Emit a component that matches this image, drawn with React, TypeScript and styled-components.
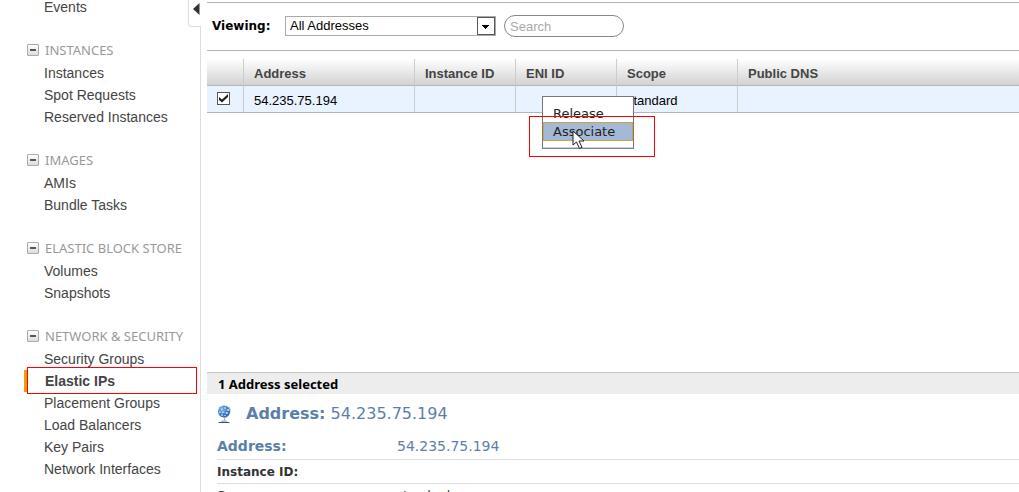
import React from 'react';
import styled, { createGlobalStyle } from 'styled-components';

const sans = '"Liberation Sans", Arial, sans-serif';
const wide = '"DejaVu Sans", Verdana, sans-serif';
const humanist = '"Noto Sans", Tahoma, sans-serif';

const GlobalStyle = createGlobalStyle`
  * { box-sizing: border-box; }
  body { margin: 0; background: #fff; color: #000; font-family: ${sans}; font-size: 13px; }
`;

const Page = styled.div`
  display: grid;
  grid-template-columns: 201px minmax(0, 1fr);
  column-gap: 6px;
  height: 100vh;
  overflow: hidden;
`;

const Sidebar = styled.aside`
  position: relative;
  border-right: 1px solid #ddd;
  min-height: 0;
`;

const CollapseButton = styled.button`
  position: absolute;
  top: -8px;
  right: -1px;
  width: 13px;
  height: 35px;
  padding: 10px 0 0 4px;
  border: 1px solid #ddd;
  border-right: 0;
  border-bottom-left-radius: 4px;
  background: #fff;
  display: flex;
  svg { display: block; flex: none; }
`;

const Nav = styled.nav`
  margin-top: -4px;
  display: flex;
  flex-direction: column;
  gap: 22px;
`;

const GroupTitle = styled.h2`
  margin: 0;
  padding: 0 0 2px 27px;
  height: 22px;
  display: flex;
  align-items: center;
  gap: 6px;
  font: 400 13px/20px ${humanist};
  color: #999;
  white-space: nowrap;
`;

const ToggleButton = styled.button`
  width: 12px;
  height: 12px;
  padding: 0;
  border: 1px solid #aaa;
  border-radius: 1px;
  background: linear-gradient(#fff, #ddd);
  display: flex;
  align-items: center;
  justify-content: center;
  &::before { content: ''; width: 6px; height: 2px; background: #555; }
`;

const NavList = styled.ul`
  list-style: none;
  margin: 0;
  padding: 0;
`;

const NavItem = styled.li<{ $active?: boolean }>`
  position: relative;
  margin-left: 24px;
  padding-left: ${p => (p.$active ? 18 : 20)}px;
  border-left: ${p => (p.$active ? '3px solid #f90' : '0')};
  font-size: 14px;
  line-height: 22px;
  font-weight: ${p => (p.$active ? 700 : 400)};
`;

const NavLink = styled.a`
  color: #444;
  text-decoration: none;
`;

const Highlight = styled.span`
  position: absolute;
  z-index: 2;
  border: 1px solid #f00;
  pointer-events: none;
`;

const NavHighlight = styled(Highlight)`
  inset: -3px 3px -2px 0;
`;

const MenuHighlight = styled(Highlight)`
  inset: 19px -22px -9px -14px;
`;

const Main = styled.main`
  display: flex;
  flex-direction: column;
  min-width: 0;
  min-height: 0;
  padding-top: 2px;
`;

const Toolbar = styled.div`
  display: flex;
  align-items: center;
  flex: none;
  height: 49px;
  padding: 0 0 1px 5px;
  border: solid #b5b5b5;
  border-width: 1px 0;
  margin-bottom: 8px;
`;

const ViewLabel = styled.label`
  width: 73px;
  font: 700 12px/20px ${wide};
`;

const SelectWrap = styled.span`
  position: relative;
  width: 211px;
  height: 20px;
  margin-right: 8px;
`;

const ViewSelect = styled.select`
  appearance: none;
  display: block;
  width: 100%;
  height: 20px;
  padding: 0 20px 0 4px;
  border: 1px solid #aaa;
  border-radius: 0;
  background: #fff;
  color: #000;
  font: 13px/18px ${sans};
`;

const SelectArrow = styled.svg`
  position: absolute;
  top: 1px;
  right: 1px;
  pointer-events: none;
`;

const SearchBox = styled.input`
  width: 120px;
  height: 22px;
  padding: 0 5px;
  border: 1px solid #888;
  border-radius: 11px;
  background: #fff;
  font: 13px/18px ${sans};
  &::placeholder { color: #aaa; opacity: 1; }
`;

const TableArea = styled.section`
  position: relative;
  flex: 1;
  min-height: 0;
`;

const AddressTable = styled.table`
  width: 100%;
  table-layout: fixed;
  border-collapse: separate;
  border-spacing: 0;

  th, td {
    height: 27px;
    padding: 2px 10px 0;
    border-right: 1px solid #ccc;
    border-bottom: 1px solid #b5b5b5;
    text-align: left;
    white-space: nowrap;
  }
  th:last-child, td:last-child { border-right: 0; }
  thead tr { background: linear-gradient(#fff, #d0d0d0); }
  tbody tr { background: #e9f2ff; }
  th { color: #444; font-weight: 700; }
`;

const Col = styled.col<{ $width?: number }>`
  width: ${p => (p.$width ? `${p.$width}px` : 'auto')};
`;

const RowCheck = styled.input`
  appearance: none;
  display: block;
  width: 13px;
  height: 13px;
  margin: 0 0 4px;
  border: 1px solid #555;
  background: #fff;
  &:checked {
    background: #fff url("data:image/svg+xml,%3Csvg xmlns='http://www.w3.org/2000/svg' viewBox='0 0 11 11'%3E%3Cpath d='M1 4v3L4 9.500 10 4V1L4 6.500z' fill='%23222'/%3E%3C/svg%3E") center / 11px 11px no-repeat;
  }
`;

const ContextMenu = styled.div`
  position: absolute;
  top: 37px;
  left: 335px;
  width: 92px;
  height: 53px;
  padding-top: 8px;
  border: 1px solid #777;
  border-bottom-color: #888;
  background: #fff;
  box-shadow: inset 0 -1px #ccc;
`;

const MenuItem = styled.button<{ $hover?: boolean }>`
  display: block;
  width: 100%;
  height: ${p => (p.$hover ? 19 : 17)}px;
  padding: 0 9px;
  border: ${p => (p.$hover ? '1px solid #d2a346' : '0 solid transparent')};
  border-left-width: 1px;
  background: ${p => (p.$hover ? '#a4b9d6' : '#fff')};
  color: #222;
  font: 13px/17px ${wide};
  text-align: left;
`;

const Pointer = styled.svg`
  position: absolute;
  top: 33px;
  left: 29px;
  z-index: 3;
`;

const DetailPanel = styled.section`
  flex: none;
  height: 120px;
  overflow: hidden;
  border-top: 1px solid #c5c5c5;
`;

const SelectionBar = styled.div`
  height: 21px;
  padding-left: 11px;
  background: #ededed;
  font: 700 13px/22px ${humanist};
`;

const DetailTitle = styled.h1`
  display: flex;
  align-items: center;
  gap: 15px;
  height: 38px;
  margin: 0;
  padding: 2px 0 0 10px;
  color: #5c7fa8;
  font: 400 16px/20px ${wide};
`;

const DetailTable = styled.table`
  width: calc(100% - 10px);
  margin-left: 10px;
  border-collapse: separate;
  border-spacing: 0;
  font-family: ${wide};
  color: #333;

  th, td { padding: 0; border-bottom: 1px solid #ddd; text-align: left; }
  th { width: 180px; font-weight: 700; }
`;

const DetailRow = styled.tr<{ $lead?: boolean }>`
  height: ${p => (p.$lead ? 28 : 24)}px;
  font-size: ${p => (p.$lead ? 14 : 12)}px;
  line-height: 20px;
  color: ${p => (p.$lead ? '#5c7fa8' : '#333')};
`;

const groups = [
  { title: 'INSTANCES', items: ['Instances', 'Spot Requests', 'Reserved Instances'] },
  { title: 'IMAGES', items: ['AMIs', 'Bundle Tasks'] },
  { title: 'ELASTIC BLOCK STORE', items: ['Volumes', 'Snapshots'] },
  {
    title: 'NETWORK & SECURITY',
    items: ['Security Groups', 'Elastic IPs', 'Placement Groups', 'Load Balancers', 'Key Pairs', 'Network Interfaces'],
  },
];

const Globe = () => (
  <svg width="14" height="20" viewBox="0 0 14 20" aria-hidden="true">
    <defs>
      <radialGradient id="ocean" cx=".35" cy=".3" r=".8">
        <stop offset="0" stopColor="#8fc0ee" />
        <stop offset=".6" stopColor="#3f84cf" />
        <stop offset="1" stopColor="#2a5fa8" />
      </radialGradient>
    </defs>
    <path d="M12.500 3.500c1.500 4-.5 9-5 10.500v3" fill="none" stroke="#a9adb8" />
    <circle cx="7" cy="7.500" r="6" fill="url(#ocean)" />
    <path d="M3.500 3.500h2v2h-2zM7 3h2v2H7zM10 5h2v2h-2zM2 7h2v2H2zM5 7h2.500v2H5zM9 8h2v2H9zM4 10.500h2v1.500H4zM7 11h2v1H7z" fill="#d5e7f8" opacity=".85" />
    <path d="M1 7.500h12M2.500 4h9M2.500 11h9M7 1.500v12M4 2.500q-2 5 0 10M10 2.500q2 5 0 10" fill="none" stroke="#2862aa" strokeOpacity=".4" strokeWidth=".7" />
    <path d="M5 16.500h4l.5 1h-5z" fill="#e4e5ea" stroke="#aaadb8" strokeWidth=".5" />
    <path d="M1.500 18.500h11" stroke="#4b5060" />
    <path d="M4 17.500h6" stroke="#b9bcc8" />
  </svg>
);

const Links = ({ items }: { items: string[] }) => (
  <NavList>
    {items.map(item => {
      const active = item === 'Elastic IPs';
      return (
        <NavItem key={item} $active={active}>
          <NavLink href="#" aria-current={active ? 'page' : undefined}>{item}</NavLink>
          {active && <NavHighlight />}
        </NavItem>
      );
    })}
  </NavList>
);

export default function App() {
  return (
    <>
      <GlobalStyle />
      <Page>
        <Sidebar>
          <Nav>
            <Links items={['Events']} />
            {groups.map(group => (
              <div key={group.title}>
                <GroupTitle>
                  <ToggleButton aria-label={`Collapse ${group.title}`} />
                  {group.title}
                </GroupTitle>
                <Links items={group.items} />
              </div>
            ))}
          </Nav>
          <CollapseButton aria-label="Collapse navigation">
            <svg width="7" height="12" viewBox="0 0 7 12"><path d="M6.500 0v12L0 6z" fill="#333" /></svg>
          </CollapseButton>
        </Sidebar>
        <Main>
          <Toolbar>
            <ViewLabel htmlFor="view">Viewing:</ViewLabel>
            <SelectWrap>
              <ViewSelect id="view"><option>All Addresses</option></ViewSelect>
              <SelectArrow width="18" height="18" viewBox="0 0 18 18">
                <rect x=".5" y=".5" width="17" height="17" fill="#fff" stroke="#555" />
                <path d="M5 8h7v1h-1v1h-1v1H9v1H8v-1H7v-1H6V9H5z" fill="#000" />
              </SelectArrow>
            </SelectWrap>
            <SearchBox type="text" placeholder="Search" aria-label="Search" />
          </Toolbar>
          <TableArea>
            <AddressTable>
              <colgroup>
                <Col $width={37} /><Col $width={171} /><Col $width={101} />
                <Col $width={101} /><Col $width={121} /><Col />
              </colgroup>
              <thead>
                <tr>
                  <th /><th>Address</th><th>Instance ID</th><th>ENI ID</th><th>Scope</th><th>Public DNS</th>
                </tr>
              </thead>
              <tbody>
                <tr>
                  <td><RowCheck type="checkbox" defaultChecked aria-label="Select 54.235.75.194" /></td>
                  <td>54.235.75.194</td><td /><td /><td>standard</td><td />
                </tr>
              </tbody>
            </AddressTable>
            <ContextMenu role="menu">
              <MenuItem role="menuitem">Release</MenuItem>
              <MenuItem role="menuitem" $hover>Associate</MenuItem>
              <MenuHighlight />
              <Pointer width="13" height="20" viewBox="0 0 13 20">
                <path d="M1 1v14l3.500-3 3 6.500 2.500-1.200-3-6.300h5z" fill="#fff" stroke="#222" />
              </Pointer>
            </ContextMenu>
          </TableArea>
          <DetailPanel>
            <SelectionBar>1 Address selected</SelectionBar>
            <DetailTitle>
              <Globe />
              <span><b>Address:</b> 54.235.75.194</span>
            </DetailTitle>
            <DetailTable>
              <tbody>
                <DetailRow $lead><th scope="row">Address:</th><td>54.235.75.194</td></DetailRow>
                <DetailRow><th scope="row">Instance ID:</th><td /></DetailRow>
                <DetailRow><th scope="row">Scope:</th><td>standard</td></DetailRow>
              </tbody>
            </DetailTable>
          </DetailPanel>
        </Main>
      </Page>
    </>
  );
}
